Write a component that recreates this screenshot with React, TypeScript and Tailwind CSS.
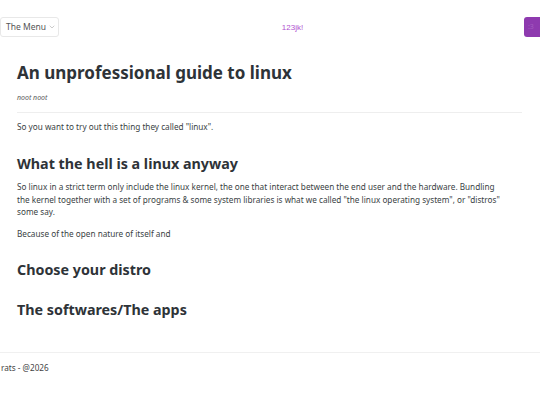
import { ChevronDown } from "lucide-react"

const font = { fontFamily: '"Noto Sans", "Open Sans", sans-serif' }

const Header: React.FC = () => {
  return (
    <header className="flex h-[61px] items-start justify-between pt-[17px]">
      <button className="flex h-[20px] w-[59px] items-center gap-[2px] rounded-[3px] border border-[#e8e8e8] bg-white pl-[5px] text-[8.5px] text-[#555]">
        The Menu
        <ChevronDown size={8} strokeWidth={1.5} className="text-[#999]" />
      </button>
      <span className="mt-[5px] ml-[2px] font-['Liberation_Sans',Arial,sans-serif] text-[8px] text-[#b050d0]">
        123jk!
      </span>
      <button className="-mr-[2px] flex h-[20px] w-[18px] items-center rounded-[3px] bg-[#8e3aaf] pl-[4px] text-[7px] text-[#a35cc0]">
        :3
      </button>
    </header>
  )
}

export default function App() {
  return (
    <div className="min-h-[405px] bg-white text-[#3a3f44]" style={font}>
      <Header />
      <main className="px-[17px] pr-[18px]">
        <h1 className="text-[17px] leading-[24px] font-bold text-[#2e3338]">
          An unprofessional guide to linux
        </h1>
        <p className="mt-[8px] text-[7px] leading-[10px] italic text-[#5a5a5a]">noot noot</p>
        <hr className="mt-[9px] border-[#eeeeee]" />
        <p className="mt-[8px] text-[8.2px] leading-[12px]">
          So you want to try out this thing they called "linux".
        </p>
        <h2 className="mt-[21px] text-[14.3px] leading-[20px] font-bold text-[#2e3338]">
          What the hell is a linux anyway
        </h2>
        <p className="mt-[7px] max-w-[490px] text-[8.2px] leading-[12.5px]">
          So linux in a strict term only include the linux kernel, the one that interact between the end user and the hardware. Bundling the kernel together with a set of programs &amp; some system libraries is what we called "the linux operating system", or "distros" some say.
        </p>
        <p className="mt-[9.5px] text-[8.2px] leading-[12px]">Because of the open nature of itself and</p>
        <h2 className="mt-[20px] text-[14.3px] leading-[20px] font-bold text-[#2e3338]">
          Choose your distro
        </h2>
        <h2 className="mt-[20px] text-[14.3px] leading-[20px] font-bold text-[#2e3338]">
          The softwares/The apps
        </h2>
      </main>
      <footer className="mt-[32px] border-t border-[#f0f0f0] pt-[9px] pl-[1px] text-[8.2px] leading-[12px] text-[#444]">
        rats - @2026
      </footer>
    </div>
  )
}
